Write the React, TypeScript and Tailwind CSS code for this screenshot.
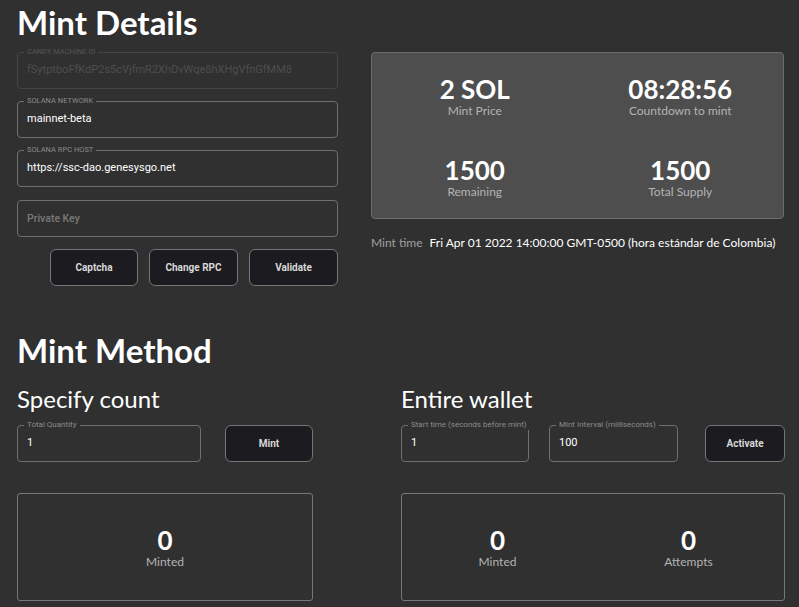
import React from "react";

const lato = "font-['Lato','Liberation_Sans',sans-serif]";
const roboto = "font-['Roboto','Liberation_Sans',sans-serif]";

type FieldProps = {
  label: string;
  value?: string;
  placeholder?: string;
  disabled?: boolean;
  upper?: boolean;
  className?: string;
};

function Field({ label, value, placeholder, disabled, upper, className = "" }: FieldProps) {
  return (
    <div
      className={`relative h-[37px] shrink-0 rounded-[4px] border flex items-center pl-[9px] ${roboto} ${
        disabled ? "border-[#444444]" : "border-[#6f6f6f]"
      } ${className}`}
    >
      {label && (
        <span
          className={`absolute -top-[6px] left-[6px] whitespace-nowrap px-[3px] bg-[#303030] leading-[10px] ${
            upper ? "text-[7.5px] uppercase" : "text-[8px]"
          } ${disabled ? "text-[#555555]" : "text-[#8c8c8c]"}`}
        >
          {label}
        </span>
      )}
      {value !== undefined ? (
        <span className={`whitespace-nowrap text-[11px] ${disabled ? "text-[#4e4e4e]" : "text-white"}`}>{value}</span>
      ) : (
        <span className="text-[10.5px] font-medium text-[#7a7a7a]">{placeholder}</span>
      )}
    </div>
  );
}

function Btn({ children, className = "" }: { children: React.ReactNode; className?: string }) {
  return (
    <button
      className={`h-[37px] shrink-0 rounded-[6px] border border-[#767676] bg-[#1c1b20] text-[10px] font-bold text-[#d8d8d8] ${roboto} ${className}`}
    >
      {children}
    </button>
  );
}

function Stat({ value, label }: { value: string; label: string }) {
  return (
    <div className="flex flex-col items-center">
      <div className="text-[26px] font-bold leading-[30px] text-white">{value}</div>
      <div className="text-[12px] leading-[14px] text-[#b4b4b4]">{label}</div>
    </div>
  );
}

export default function App() {
  return (
    <div className={`min-h-[607px] w-[799px] bg-[#303030] pl-[17px] ${lato}`}>
      <h1 className="pt-[2px] text-[33px] font-bold leading-[40px] text-white">Mint Details</h1>

      <div className="mt-[10px] flex gap-[33px]">
        {/* connection settings */}
        <div className="flex w-[321px] flex-col gap-[12px]">
          <Field label="Candy Machine ID" value="fSytptboFfKdP2s5cVjfmR2XhDvWqe8hXHgVfnGfMM8" disabled upper />
          <Field label="Solana Network" value="mainnet-beta" upper />
          <Field label="Solana RPC Host" value="https://ssc-dao.genesysgo.net" upper />
          <Field label="" placeholder="Private Key" className="mt-[1px]" />
          <div className="flex justify-end gap-[11px]">
            <Btn className="w-[88px]">Captcha</Btn>
            <Btn className="w-[89px]">Change RPC</Btn>
            <Btn className="w-[89px]">Validate</Btn>
          </div>
        </div>

        {/* candy machine state */}
        <div className="w-[413px]">
          <div className="grid h-[167px] grid-cols-2 grid-rows-2 rounded-[4px] border border-[#6c6c6c] bg-[#4e4e4e]">
            <div className="flex items-center justify-center pt-[3px]"><Stat value="2 SOL" label="Mint Price" /></div>
            <div className="flex items-center justify-center pt-[3px]"><Stat value="08:28:56" label="Countdown to mint" /></div>
            <div className="flex items-center justify-center pt-[1px]"><Stat value="1500" label="Remaining" /></div>
            <div className="flex items-center justify-center pt-[1px]"><Stat value="1500" label="Total Supply" /></div>
          </div>
          <div className="mt-[16px] flex items-center gap-[7px] whitespace-nowrap text-[12px] leading-[16px]">
            <span className="text-[#a0a0a0]">Mint time</span>
            <span className="text-white">Fri Apr 01 2022 14:00:00 GMT-0500 (hora estándar de Colombia)</span>
          </div>
        </div>
      </div>

      <h1 className="mt-[41px] pt-[3px] text-[33px] font-bold leading-[40px] text-white">Mint Method</h1>

      <div className="mt-[13px] grid w-[768px] grid-cols-2">
        {/* single count mint */}
        <div className="w-[296px]">
          <h2 className="text-[24px] leading-[32px] text-white">Specify count</h2>
          <div className="mt-[10px] flex gap-[24px]">
            <Field label="Total Quantity" value="1" className="w-[184px]" />
            <Btn className="w-[88px]">Mint</Btn>
          </div>
          <div className="mt-[31px] flex h-[108px] items-center justify-center rounded-[3px] border border-[#777777]">
            <Stat value="0" label="Minted" />
          </div>
        </div>

        {/* wallet drain mint */}
        <div className="w-[384px]">
          <h2 className="text-[24px] leading-[32px] text-white">Entire wallet</h2>
          <div className="mt-[10px] flex">
            <Field label="Start time (seconds before mint)" value="1" className="w-[128px]" />
            <Field label="Mint Interval (milliseconds)" value="100" className="ml-[20px] w-[129px]" />
            <Btn className="ml-[27px] w-[80px]">Activate</Btn>
          </div>
          <div className="mt-[31px] grid h-[108px] grid-cols-2 items-center rounded-[3px] border border-[#777777]">
            <Stat value="0" label="Minted" />
            <Stat value="0" label="Attempts" />
          </div>
        </div>
      </div>
    </div>
  );
}
